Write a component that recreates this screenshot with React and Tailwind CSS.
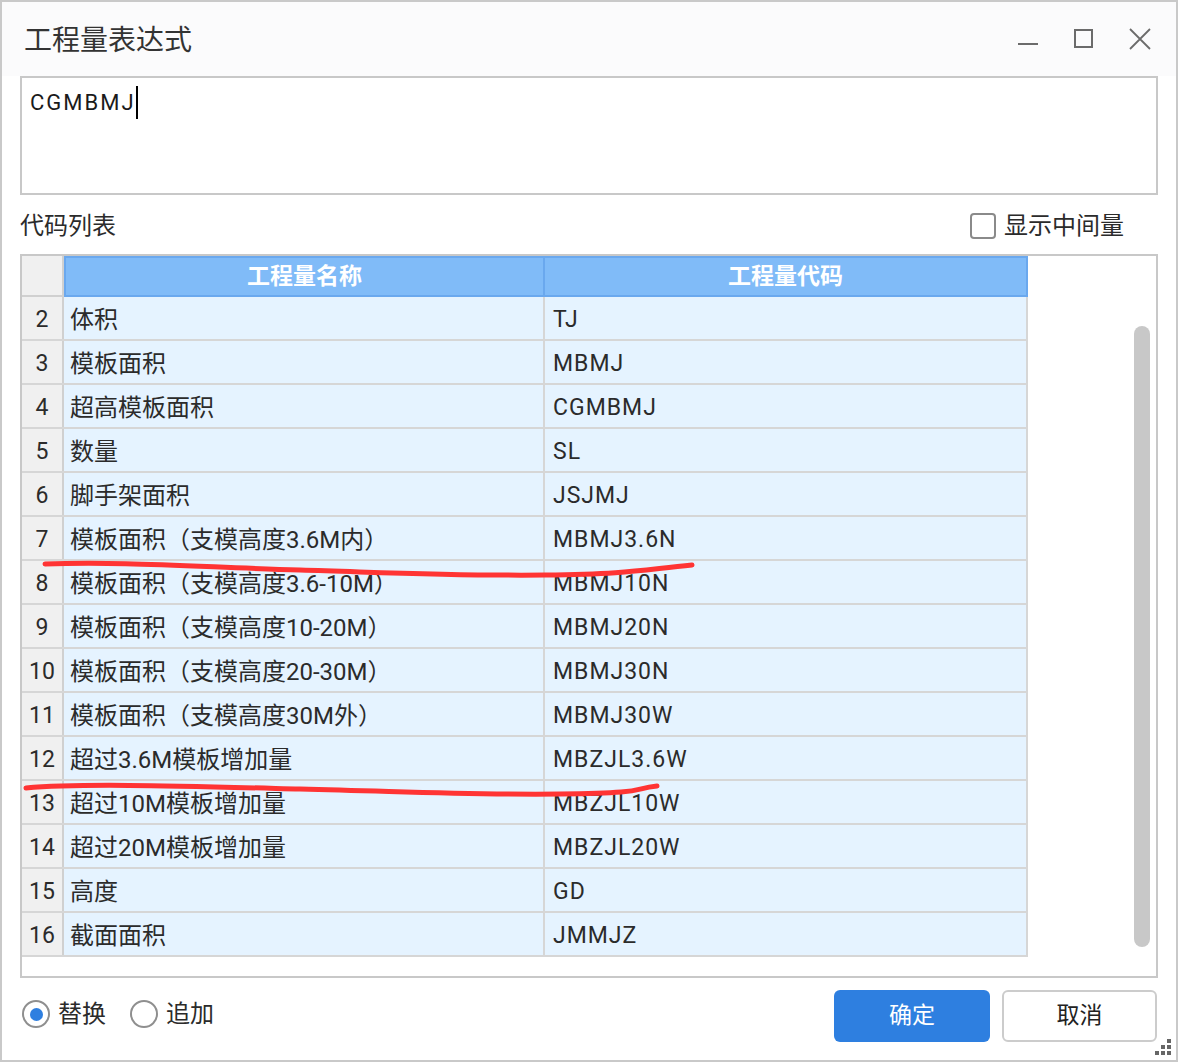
import React from 'react';

const rows = [
  ['2', '体积', 'TJ'],
  ['3', '模板面积', 'MBMJ'],
  ['4', '超高模板面积', 'CGMBMJ'],
  ['5', '数量', 'SL'],
  ['6', '脚手架面积', 'JSJMJ'],
  ['7', '模板面积（支模高度3.6M内）', 'MBMJ3.6N'],
  ['8', '模板面积（支模高度3.6-10M）', 'MBMJ10N'],
  ['9', '模板面积（支模高度10-20M）', 'MBMJ20N'],
  ['10', '模板面积（支模高度20-30M）', 'MBMJ30N'],
  ['11', '模板面积（支模高度30M外）', 'MBMJ30W'],
  ['12', '超过3.6M模板增加量', 'MBZJL3.6W'],
  ['13', '超过10M模板增加量', 'MBZJL10W'],
  ['14', '超过20M模板增加量', 'MBZJL20W'],
  ['15', '高度', 'GD'],
  ['16', '截面面积', 'JMMJZ'],
];

function WindowButtons() {
  return (
    <div className="ml-auto flex items-center gap-[34px] pr-[25px]">
      <svg width="22" height="22" viewBox="0 0 22 22">
        <line x1="1" y1="16" x2="21" y2="16" stroke="#6b6b6b" strokeWidth="2" />
      </svg>
      <svg width="22" height="22" viewBox="0 0 22 22">
        <rect x="2" y="2" width="17" height="17" fill="none" stroke="#6b6b6b" strokeWidth="2" />
      </svg>
      <svg width="22" height="22" viewBox="0 0 22 22">
        <path d="M1 1 L21 21 M21 1 L1 21" stroke="#6b6b6b" strokeWidth="1.8" />
      </svg>
    </div>
  );
}

function App() {
  return (
    <div
      className="relative w-[1178px] h-[1062px] bg-white text-[#2b2b2b]"
      style={{ fontFamily: 'Roboto, "Noto Sans CJK SC", sans-serif' }}
    >
      <div className="h-full border-2 border-[#c9c9c9] bg-white flex flex-col">
        {/* title bar */}
        <div className="h-[74px] flex items-center pl-[22px] bg-[#fbfbfc]">
          <span className="text-[28px] leading-none text-[#333] pt-[4px]">工程量表达式</span>
          <WindowButtons />
        </div>

        {/* expression box */}
        <div className="mx-[18px] h-[119px] border-2 border-[#c8c8c8] bg-white pl-[8px] pt-[8px]">
          <div className="flex items-center h-[33px]">
            <span className="text-[22px] leading-none tracking-[2px] text-[#1a1a1a] pt-[1px]">CGMBMJ</span>
            <span className="w-[2px] h-[33px] bg-black" />
          </div>
        </div>

        {/* list label */}
        <div className="h-[59px] flex items-center px-[18px] pt-[2px]">
          <span className="text-[24px] leading-none">代码列表</span>
          <label className="ml-auto flex items-center gap-[8px] mr-[34px]">
            <span className="w-[26px] h-[26px] rounded-[4px] border-2 border-[#8a8a8a] bg-white" />
            <span className="text-[24px] leading-none">显示中间量</span>
          </label>
        </div>

        {/* table */}
        <div className="mx-[18px] h-[724px] border-2 border-[#c8c8c8] bg-white flex">
          <div className="w-[1006px] flex flex-col">
            <div className="flex h-[41px]">
              <div className="w-[42px] bg-[#f0f0f0] border-r-2 border-b-2 border-[#d0d0d0]" />
              <div className="w-[481px] bg-[#80bbf8] border-2 border-[#6aa8ee] flex items-center justify-center text-white font-bold text-[23px] pt-[1px]">
                工程量名称
              </div>
              <div className="w-[483px] bg-[#80bbf8] border-2 border-l-0 border-[#6aa8ee] flex items-center justify-center text-white font-bold text-[23px] pt-[1px]">
                工程量代码
              </div>
            </div>
            {rows.map(([num, name, code]) => (
              <div key={num} className="flex h-[44px] border-b-2 border-[#d6d6d6]">
                <div className="w-[42px] bg-[#f0f0f0] border-r-2 border-[#d0d0d0] flex items-center justify-center text-[23px] pt-[4px]">
                  {num}
                </div>
                <div className="w-[481px] bg-[#e5f3ff] border-r-2 border-[#d6d6d6] flex items-center pl-[6px] text-[24px] whitespace-nowrap pt-[3px]">
                  {name}
                </div>
                <div className="w-[483px] bg-[#e5f3ff] border-r-2 border-[#d6d6d6] flex items-center pl-[8px] text-[23px] tracking-[1px] pt-[4px]">
                  {code}
                </div>
              </div>
            ))}
          </div>
          <div className="flex-1 pl-[106px] pt-[70px]">
            <div className="w-[16px] h-[621px] rounded-full bg-[#c8c8c8]" />
          </div>
        </div>

        {/* footer */}
        <div className="flex-1 flex items-start pt-[12px] pl-[20px] pr-[19px]">
          <label className="flex items-center gap-[8px] mt-[10px]">
            <span className="w-[28px] h-[28px] rounded-full border-2 border-[#8f8f8f] flex items-center justify-center">
              <span className="w-[13px] h-[13px] rounded-full bg-[#2e7fe0]" />
            </span>
            <span className="text-[24px] leading-none">替换</span>
          </label>
          <label className="flex items-center gap-[8px] ml-[24px] mt-[10px]">
            <span className="w-[28px] h-[28px] rounded-full border-2 border-[#8f8f8f]" />
            <span className="text-[24px] leading-none">追加</span>
          </label>
          <button
            type="button"
            className="ml-auto w-[156px] h-[52px] rounded-[6px] bg-[#2e7fe0] text-white text-[23px]"
          >
            确定
          </button>
          <button
            type="button"
            className="ml-[12px] w-[155px] h-[52px] rounded-[6px] border-2 border-[#cccccc] bg-white text-[23px] text-[#222]"
          >
            取消
          </button>
        </div>
      </div>

      {/* resize grip */}
      <div className="absolute right-[7px] bottom-[7px] grid grid-cols-3 gap-[2px]">
        <span className="w-[4px] h-[4px]" />
        <span className="w-[4px] h-[4px]" />
        <span className="w-[4px] h-[4px] bg-[#666]" />
        <span className="w-[4px] h-[4px]" />
        <span className="w-[4px] h-[4px] bg-[#666]" />
        <span className="w-[4px] h-[4px] bg-[#666]" />
        <span className="w-[4px] h-[4px] bg-[#666]" />
        <span className="w-[4px] h-[4px] bg-[#666]" />
        <span className="w-[4px] h-[4px] bg-[#666]" />
      </div>

      {/* hand-drawn red marks */}
      <svg className="absolute left-0 top-0 pointer-events-none" width="1178" height="1062">
        <path
          d="M45 564 C120 561 200 567 300 570 S460 576 545 575 S640 570 692 565"
          fill="none"
          stroke="#ff3434"
          strokeWidth="5"
          strokeLinecap="round"
        />
        <path
          d="M26 788 C80 783 180 786 300 789 S470 795 560 794 S630 789 657 786"
          fill="none"
          stroke="#ff3434"
          strokeWidth="5"
          strokeLinecap="round"
        />
      </svg>
    </div>
  );
}

export default App;
